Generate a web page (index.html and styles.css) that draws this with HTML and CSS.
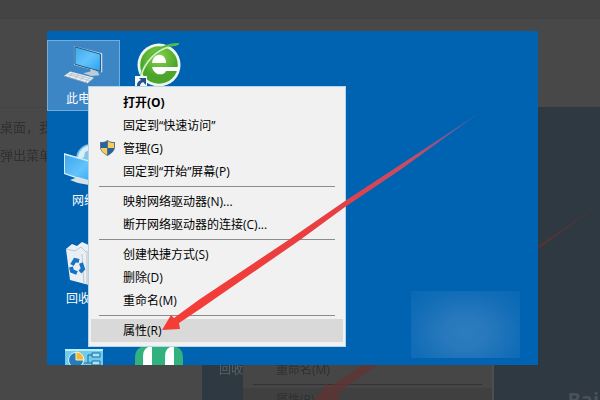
FILE: index.html
```html
<!DOCTYPE html>
<html lang="zh-CN">
<head>
<meta charset="utf-8">
<title>属性</title>
<link rel="stylesheet" href="styles.css">
</head>
<body>
<div class="page" aria-hidden="true">
  <div class="page-header"></div>
  <div class="page-body">
    <div class="article">
      <p>桌面，我</p>
      <p>弹出菜单</p>
    </div>
    <div class="photo">
      <span class="photo-label">回收</span>
      <div class="photo-menu">
        <div class="photo-item">重命名(M)</div>
        <div class="photo-line"></div>
        <div class="photo-item photo-item-active">属性(R)</div>
      </div>
      <svg class="photo-arrow" viewBox="0 0 398 293"><path d="M113 293 L125 276 L128 280 L260 190 L398 97 L270 190 L135 287 L137 293Z"/></svg>
      <span class="watermark">Bai</span>
    </div>
  </div>
</div>

<main class="lightbox">
  <section class="desktop">
    <a class="shortcut selected pc" href="#pc">
      <svg width="48" height="46" viewBox="0 0 48 46">
        <defs><linearGradient id="screen" x1="0" y1="0" x2="1" y2="1"><stop offset="0" stop-color="#3ea7ee"/><stop offset=".5" stop-color="#63c3fb"/><stop offset="1" stop-color="#28a0f0"/></linearGradient></defs>
        <path d="M13 1 L44 9 V30 L13 22Z" fill="#c7dce8"/>
        <path d="M14 2 L42 10 V29 L14 21Z" fill="url(#screen)" stroke="#174c78"/>
        <path d="M31 26 L39 29 L41 33 L32 34 L23 31 L31 29Z" fill="#bdcbd5"/>
        <path d="M9 29 L35 36 L28 42 L2 34Z" fill="#e7edf0"/>
        <path d="M2 34 L28 42 L35 36" fill="none" stroke="#7d98aa"/>
        <path d="M6 32 L30 39 M9 31 L32 37 M12 30 L8 35 M18 32 L14 37 M24 34 L20 39 M30 36 L25 41" stroke="#9fb1bd" stroke-width=".7"/>
      </svg>
      <span>此电</span>
    </a>
    <a class="shortcut browser" href="#browser" aria-label="浏览器">
      <svg width="50" height="48" viewBox="0 0 50 48">
        <defs><radialGradient id="leaf" cy=".3"><stop offset="0" stop-color="#8bd34a"/><stop offset="1" stop-color="#4ba52b"/></radialGradient></defs>
        <circle cx="25" cy="25" r="21.5" fill="#eff8ef"/>
        <circle cx="25" cy="25" r="18.8" fill="url(#leaf)"/>
        <path d="M18 23 C19 12 32 12 32 23Z" fill="#fff"/>
        <path d="M18 27 H45 V31 H32 C30 36 20 36 18 27Z" fill="#fff"/>
        <path d="M6 37 C8 19 25 2 45 3 C46 4 43 6 41 6 C27 7 14 19 6 37Z" fill="#56b947"/>
        <path d="M7 36 C11 22 22 10 35 7" fill="none" stroke="#d7f2c5" stroke-width="1.500"/>
        <path d="M1 36 H13 V48 H1Z" fill="#f4f6f8"/>
        <path d="M3 46 C3 42 5 41 7 40 L5 38 H12 V45 L9 42 C7 43 6 44 6 46Z" fill="#24508d"/>
      </svg>
    </a>
    <a class="shortcut network" href="#network">
      <svg width="48" height="46" viewBox="0 0 48 46">
        <circle cx="27" cy="16" r="15" fill="#83c4e8"/>
        <path d="M14 14 C16 5 24 1 31 2 L26 7 L21 9 L20 14 L15 17Z M25 12 L32 8 L34 18 L26 20Z" fill="#d9eff6"/>
        <path d="M0 10 L34 20 V43 L0 31Z" fill="#d2edf8"/>
        <path d="M1 12 L33 21 V41 L1 30Z" fill="url(#screen)"/>
        <path d="M14 34 L28 38 L25 42 L14 40 L6 37Z" fill="#d7e1e8"/>
      </svg>
      <span>网络</span>
    </a>
    <a class="shortcut bin" href="#bin">
      <svg width="48" height="46" viewBox="0 0 48 46">
        <path d="M5 8 L11 3 L16 5 L21 1 L30 5 L37 4 L36 42 L28 44 L9 39Z" fill="#e9eff3"/>
        <path d="M5 8 L14 10 L20 6 L25 11 L36 9 M21 13 L23 43" fill="none" stroke="#b8c9d5"/>
        <path d="M25 11 L36 9 L35 42 L25 43Z" fill="#d1dae1"/>
        <g fill="none" stroke="#1673c2" stroke-width="4"><path d="M11 24 L14 19 L18 20"/><path d="M20 22 L22 28 L19 31"/><path d="M16 32 L11 30 L10 26"/></g>
      </svg>
      <span>回收</span>
    </a>
    <a class="shortcut panel" href="#panel" aria-label="控制面板">
      <svg width="38" height="18" viewBox="0 0 38 18">
        <path d="M0 1 H38 V18 H0Z" fill="#72caec"/><path d="M0 1 H38" stroke="#b8edff" stroke-width="2"/>
        <circle cx="11" cy="11" r="7.500" fill="#247dbd" stroke="#d5f3ff"/>
        <path d="M11 11 V3 A8 8 0 0 1 19 11Z" fill="#f3b83a" stroke="#fff1c1"/>
        <path d="M19 14 H23 V6 H27 M23 14 H27" fill="none" stroke="#176ca5"/>
        <path d="M27 4 H35 V8 H27Z M27 12 H35 V16 H27Z" fill="#a7e3f8" stroke="#176ca5"/>
      </svg>
    </a>
    <a class="shortcut app" href="#app" aria-label="应用">
      <svg width="48" height="19" viewBox="0 0 48 19">
        <path d="M0 19 V12 Q0 0 12 0 H36 Q48 0 48 12 V19Z" fill="#31b17e"/>
        <path d="M8 19 V10 Q8 1 17 0 V19Z M30 19 V10 Q30 1 39 0 V19Z" fill="#fff"/>
      </svg>
    </a>

    <div class="blur-patch"></div>

    <div class="menu" role="menu">
      <button class="item default" role="menuitem">打开(O)</button>
      <button class="item" role="menuitem">固定到“快速访问”</button>
      <button class="item" role="menuitem"><svg class="shield" width="15" height="16" viewBox="0 0 15 16"><path d="M7.500 0 C10 2 12 2 15 2 V7 C15 11 11 14 7.500 16 C4 14 0 11 0 7 V2 C3 2 5 2 7.500 0Z" fill="#5d7183"/><path d="M7 1.500 V8 H1 V3 C4 3 5 3 7 1.500Z M8 8 H14 C14 11 11 13 8 15Z" fill="#2463a4"/><path d="M8 1.500 C10 3 12 3 14 3 V8 H8Z M1 8 H7 V15 C4 13 1 11 1 8Z" fill="#f4ce58"/></svg>管理(G)</button>
      <button class="item" role="menuitem">固定到“开始”屏幕(P)</button>
      <hr>
      <button class="item" role="menuitem">映射网络驱动器(N)...</button>
      <button class="item" role="menuitem">断开网络驱动器的连接(C)...</button>
      <hr>
      <button class="item" role="menuitem">创建快捷方式(S)</button>
      <button class="item" role="menuitem">删除(D)</button>
      <button class="item" role="menuitem">重命名(M)</button>
      <hr>
      <button class="item active" role="menuitem">属性(R)</button>
    </div>

    <svg class="arrow" width="491" height="334" viewBox="0 0 491 334">
      <defs><linearGradient id="fade" gradientUnits="userSpaceOnUse" x1="115" y1="300" x2="432" y2="83"><stop offset="0" stop-color="#f63c35"/><stop offset=".55" stop-color="#e63f43"/><stop offset=".8" stop-color="#c34e68"/><stop offset="1" stop-color="#9158a0" stop-opacity=".5"/></linearGradient></defs>
      <path d="M115 299 L124 284 L127 287 L153 268 L243 208 L298 170 L353 134 L432 82 L353 139 L298 176 L253 209 L153 278 L132 292 L133 298Z" fill="url(#fade)"/>
    </svg>
  </section>
</main>
</body>
</html>
```
FILE: styles.css
```css
* { box-sizing: border-box; }

body {
  margin: 0;
  background: #484848;
  font: 12px/23px "Open Sans", "Noto Sans CJK SC", sans-serif;
}

.page {
  position: fixed;
  inset: 0;
  display: flex;
  flex-direction: column;
  overflow: hidden;
  color: #303030;
}

.page-header {
  height: 19px;
  background: #444;
  border-bottom: 1px solid #424242;
}

.page-body {
  flex: 1;
  display: grid;
  grid-template-columns: 202px 1fr;
  padding-top: 88px;
}

.article {
  padding-top: 5px;
  font-size: 13px;
  line-height: 28px;
  border-top: 1px solid #444;
}

.article p { margin: 0; }

.photo {
  position: relative;
  display: flex;
  align-items: flex-end;
  overflow: hidden;
  background: #2f3942;
}

.photo-label {
  flex: none;
  width: 41px;
  height: 42px;
  padding-left: 17px;
  color: #5a6266;
  white-space: nowrap;
}

.photo-menu {
  width: 251px;
  height: 42px;
  background: #464646;
  border-right: 2px solid #4b4f50;
}

.photo-item {
  height: 23px;
  padding-left: 33px;
}

.photo-line {
  height: 1px;
  margin: 3px 10px;
  background: #333;
}

.photo-item-active {
  height: 12px;
  background: #404040;
}

.photo-arrow {
  position: absolute;
  left: 0;
  bottom: 0;
  width: 398px;
  height: 293px;
  fill: #633332;
  opacity: .7;
}

.watermark {
  position: absolute;
  right: 1px;
  bottom: -11px;
  color: #4a5157;
  font-size: 20px;
  font-weight: 700;
}

.lightbox {
  position: relative;
  display: grid;
  min-height: 100vh;
  padding: 31px 62px 35px 47px;
}

.desktop {
  position: relative;
  overflow: hidden;
  background: #0063b1;
}

.shortcut {
  position: absolute;
  display: flex;
  flex-direction: column;
  align-items: center;
  color: #fff;
  text-decoration: none;
}

.shortcut svg { display: block; }

.shortcut span {
  align-self: flex-start;
  padding-left: 18px;
  line-height: 23px;
}

.selected {
  background: #3d86c6;
  border: 1px solid #72aedd;
}

.pc {
  left: 0;
  top: 9px;
  width: 73px;
  height: 71px;
  padding-top: 4px;
}

.browser { left: 87px; top: 9px; }
.network { left: 1px; top: 112px; width: 73px; }
.network svg { margin-left: 7px; }
.network span { padding-left: 24px; }
.bin { left: 1px; top: 210px; width: 73px; }
.panel { left: 18px; top: 318px; }
.app { left: 88px; top: 315px; }

.blur-patch {
  position: absolute;
  right: 18px;
  bottom: 7px;
  width: 109px;
  height: 67px;
  background: radial-gradient(ellipse at 50% 62%, #2c7dbf 0%, #2778bc 30%, #126db7 70%, #0968b4 100%);
}

.menu {
  position: absolute;
  left: 41px;
  top: 55px;
  width: 258px;
  padding: 4px 2px 4px;
  background: #f1f1f1;
  border: 1px solid #b7d5e8;
}

.item {
  display: block;
  position: relative;
  width: 100%;
  height: 23px;
  padding: 0 0 0 32px;
  border: 0;
  background: none;
  color: #000;
  font: inherit;
  text-align: left;
}

.default { font-weight: 700; }
.active { background: #d9d9d9; }

.shield {
  position: absolute;
  left: 9px;
  top: 3px;
}

.menu hr {
  height: 1px;
  margin: 3px 8px;
  border: 0;
  background: #8c8c8c;
}

.arrow {
  position: absolute;
  left: 0;
  top: 0;
}
```
